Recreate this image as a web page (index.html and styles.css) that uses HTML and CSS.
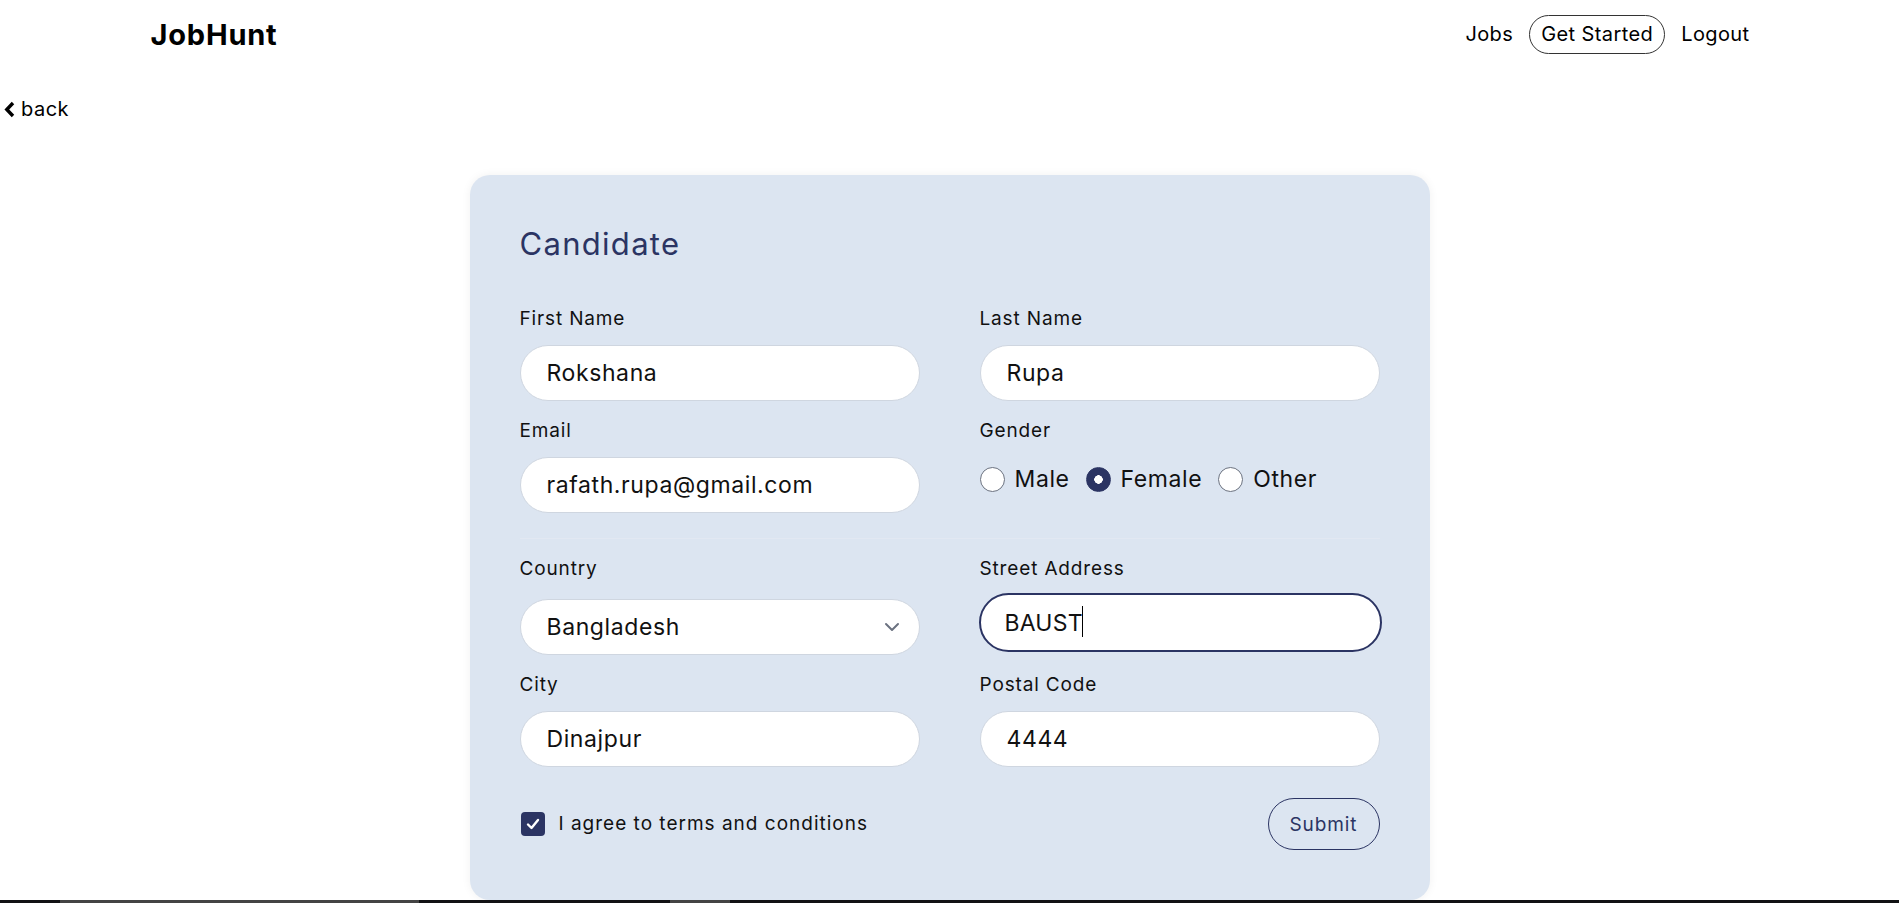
FILE: index.html
```html
<!DOCTYPE html>
<html lang="en">
<head>
<meta charset="utf-8">
<title>JobHunt - Candidate</title>
<link rel="stylesheet" href="styles.css">
</head>
<body>
<header class="navbar">
  <div class="nav-inner">
    <a class="brand" href="#">JobHunt</a>
    <nav class="nav-links">
      <a href="#" class="nav-link">Jobs</a>
      <a href="#" class="nav-link pill">Get Started</a>
      <a href="#" class="nav-link">Logout</a>
    </nav>
  </div>
</header>

<a href="#" class="back">
  <svg class="back-icon" width="13" height="17" viewBox="0 0 13 17"><polyline points="10,2 3.8,8.5 10,15" fill="none" stroke="#000" stroke-width="3.4" stroke-linejoin="miter"/></svg>
  <span>back</span>
</a>

<main class="card">
  <h1 class="title">Candidate</h1>
  <form class="form-grid">
    <div class="field">
      <label class="label">First Name</label>
      <input class="input" type="text" value="Rokshana">
    </div>
    <div class="field">
      <label class="label">Last Name</label>
      <input class="input" type="text" value="Rupa">
    </div>
    <div class="field">
      <label class="label">Email</label>
      <input class="input" type="email" value="rafath.rupa@gmail.com">
    </div>
    <div class="field">
      <label class="label">Gender</label>
      <div class="radios">
        <label class="radio-opt"><input type="radio" name="g" class="radio"><span>Male</span></label>
        <label class="radio-opt"><input type="radio" name="g" class="radio" checked><span>Female</span></label>
        <label class="radio-opt"><input type="radio" name="g" class="radio"><span>Other</span></label>
      </div>
    </div>
    <hr class="divider">
    <div class="field">
      <label class="label">Country</label>
      <div class="select-wrap">
        <select class="input select">
          <option>Bangladesh</option>
        </select>
        <svg class="select-arrow" width="16" height="10" viewBox="0 0 16 10"><polyline points="2,2 8,8 14,2" fill="none" stroke="#6b7280" stroke-width="2" stroke-linecap="round" stroke-linejoin="round"/></svg>
      </div>
    </div>
    <div class="field">
      <label class="label">Street Address</label>
      <div class="focus-wrap">
        <input class="input focused" type="text" value="BAUST">
        <span class="caret"></span>
      </div>
    </div>
    <div class="field">
      <label class="label">City</label>
      <input class="input" type="text" value="Dinajpur">
    </div>
    <div class="field">
      <label class="label">Postal Code</label>
      <input class="input" type="text" value="4444">
    </div>
    <div class="form-footer">
      <label class="agree">
        <span class="checkbox">
          <svg width="14" height="12" viewBox="0 0 14 12"><polyline points="2,6.5 5.5,10 12,2" fill="none" stroke="#fff" stroke-width="2.4" stroke-linecap="round" stroke-linejoin="round"/></svg>
        </span>
        <span>I agree to terms and conditions</span>
      </label>
      <button type="button" class="submit">Submit</button>
    </div>
  </form>
</main>

<div class="taskbar-edge">
  <span class="seg seg1"></span>
  <span class="seg seg2"></span>
</div>
</body>
</html>
```
FILE: styles.css
```css
* { box-sizing: border-box; }

html, body {
  margin: 0;
  padding: 0;
  background: #ffffff;
  font-family: "Inter", "Open Sans", "Liberation Sans", sans-serif;
  color: #111111;
}

a { color: inherit; text-decoration: none; }

.navbar {
  height: 68px;
}

.nav-inner {
  width: 1600px;
  margin: 0 auto;
  height: 100%;
  display: flex;
  align-items: center;
  justify-content: space-between;
}

.brand {
  font-size: 29px;
  font-weight: 700;
  color: #000;
  letter-spacing: 0.8px;
  padding-left: 1px;
}

.nav-links {
  display: flex;
  align-items: center;
  gap: 16px;
}

.nav-link {
  font-size: 20px;
  color: #000;
  line-height: 24px;
  letter-spacing: 0.4px;
}

.nav-link.pill {
  border: 1px solid #333;
  border-radius: 999px;
  height: 39px;
  padding: 0 11px;
  display: flex;
  align-items: center;
}

.back {
  display: inline-flex;
  align-items: center;
  gap: 5px;
  margin-top: 29px;
  margin-left: 3px;
  font-size: 20px;
  line-height: 24px;
  letter-spacing: 0.5px;
  color: #000;
}

.back-icon { display: block; margin-top: 1px; }

.card {
  width: 960px;
  margin: 53px auto 0;
  padding: 50px 50px 50px;
  background: #dce5f1;
  border-radius: 20px;
  box-shadow: 0 0 10px rgba(0, 0, 0, 0.06);
}

.title {
  margin: 0 0 44px;
  font-size: 31px;
  line-height: 38px;
  font-weight: 400;
  letter-spacing: 1.3px;
  color: #2b3463;
}

.form-grid {
  display: grid;
  grid-template-columns: 1fr 1fr;
  column-gap: 60px;
  row-gap: 18px;
}

.field {
  display: flex;
  flex-direction: column;
}

.label {
  display: block;
  font-size: 19px;
  line-height: 24px;
  letter-spacing: 0.85px;
  margin-bottom: 14px;
  color: #111;
}

.input {
  width: 100%;
  height: 56px;
  border: 1px solid #cfd6e0;
  border-radius: 999px;
  background: #fff;
  padding: 0 26px;
  font-family: inherit;
  font-size: 23px;
  letter-spacing: 0.6px;
  color: #111;
  outline: none;
}

.select-wrap {
  position: relative;
  margin-top: 4px;
}

.select {
  appearance: none;
  -webkit-appearance: none;
}

.select-arrow {
  position: absolute;
  right: 20px;
  top: 23px;
}

.focus-wrap {
  position: relative;
}

.input.focused {
  border: 2px solid #2b3463;
  padding-left: 24px;
  height: 59px;
  margin-top: -2px;
  width: calc(100% + 3px);
  margin-left: -1px;
  letter-spacing: 0.2px;
}

.caret {
  position: absolute;
  left: 102px;
  top: 11px;
  width: 1.5px;
  height: 31px;
  background: #000;
}

.radios {
  display: flex;
  align-items: center;
  margin-top: 9px;
  gap: 16px;
}

.radio-opt {
  display: flex;
  align-items: center;
  gap: 10px;
  font-size: 23px;
  letter-spacing: 0.6px;
  line-height: 26px;
}

.radio {
  appearance: none;
  -webkit-appearance: none;
  margin: 0;
  width: 25px;
  height: 25px;
  border-radius: 50%;
  border: 1px solid #6b7280;
  background: #fff;
}

.radio:checked {
  border-color: #2b3463;
  background: radial-gradient(circle, #fff 0 4px, #2b3463 4.5px);
}

.divider {
  grid-column: 1 / -1;
  border: 0;
  height: 1px;
  background: #e2e8f2;
  margin: 7px 0 0;
}

.form-footer {
  grid-column: 1 / -1;
  display: flex;
  align-items: center;
  justify-content: space-between;
  margin-top: 13px;
}

.agree {
  display: flex;
  align-items: center;
  gap: 14px;
  font-size: 19px;
  line-height: 24px;
  letter-spacing: 1px;
  padding-left: 1px;
}

.checkbox {
  width: 24px;
  height: 24px;
  border-radius: 4px;
  background: #2b3463;
  display: flex;
  align-items: center;
  justify-content: center;
}

.submit {
  height: 52px;
  width: 112px;
  border: 1px solid #2b3463;
  border-radius: 999px;
  background: transparent;
  font-family: inherit;
  font-size: 19px;
  letter-spacing: 0.9px;
  color: #2b3463;
}

.taskbar-edge {
  position: fixed;
  left: 0;
  right: 0;
  bottom: 0;
  height: 3px;
  background: #111214;
}

.seg {
  position: absolute;
  top: 0;
  height: 3px;
  background: #444;
}

.seg1 { left: 60px; width: 359px; }
.seg2 { left: 670px; width: 60px; }
```
